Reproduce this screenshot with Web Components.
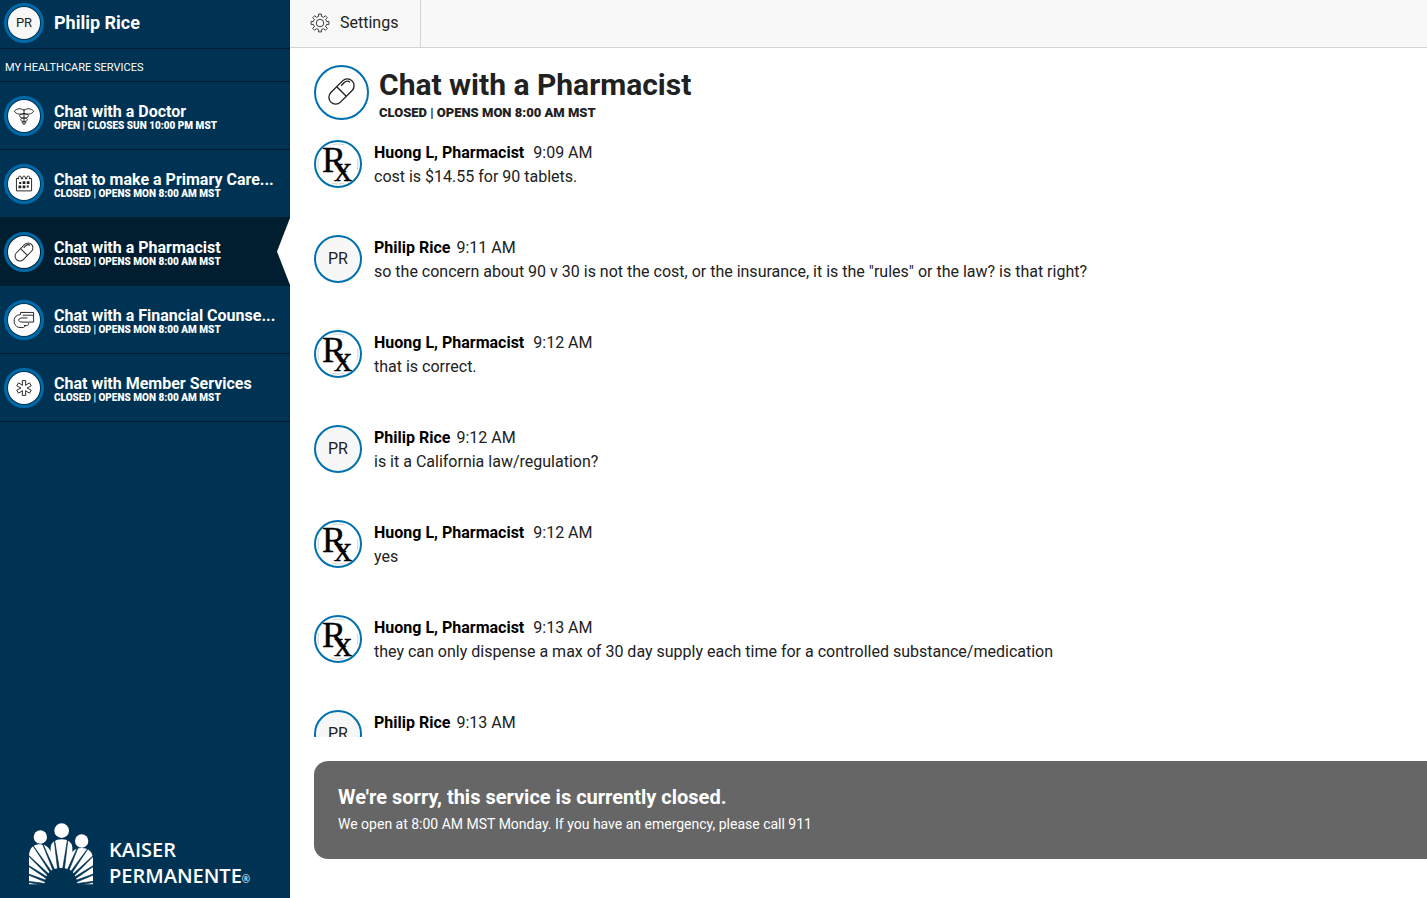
<!DOCTYPE html>
<html lang="en">
<head>
<meta charset="utf-8">
<meta name="viewport" content="width=device-width, initial-scale=1">
<title>Chat with a Pharmacist</title>
<style>
    html, body { margin: 0; height: 100%; }
    body { font-family: Roboto, "Liberation Sans", sans-serif; font-size: 16px; color: #212121; background: #fff; }
</style>
</head>
<body>
<chat-app>
    <side-nav slot="nav">
        <user-profile slot="profile" initials="PR">Philip Rice</user-profile>
        <service-item icon="doctor" status="OPEN | CLOSES SUN 10:00 PM MST">Chat with a Doctor</service-item>
        <service-item icon="calendar" status="CLOSED | OPENS MON 8:00 AM MST">Chat to make a Primary Care...</service-item>
        <service-item icon="pill" status="CLOSED | OPENS MON 8:00 AM MST" active>Chat with a Pharmacist</service-item>
        <service-item icon="card" status="CLOSED | OPENS MON 8:00 AM MST">Chat with a Financial Counse...</service-item>
        <service-item icon="asterisk" status="CLOSED | OPENS MON 8:00 AM MST">Chat with Member Services</service-item>
        <brand-logo slot="footer"></brand-logo>
    </side-nav>
    <tool-bar slot="toolbar">Settings</tool-bar>
    <chat-title slot="title" icon="pill" status="CLOSED | OPENS MON 8:00 AM MST">Chat with a Pharmacist</chat-title>

    <chat-message from="rx" name="Huong L, Pharmacist" time="9:09 AM">cost is $14.55 for 90 tablets.</chat-message>
    <chat-message name="Philip Rice" time="9:11 AM">so the concern about 90 v 30 is not the cost, or the insurance, it is the "rules" or the law? is that right?</chat-message>
    <chat-message from="rx" name="Huong L, Pharmacist" time="9:12 AM">that is correct.</chat-message>
    <chat-message name="Philip Rice" time="9:12 AM">is it a California law/regulation?</chat-message>
    <chat-message from="rx" name="Huong L, Pharmacist" time="9:12 AM">yes</chat-message>
    <chat-message from="rx" name="Huong L, Pharmacist" time="9:13 AM">they can only dispense a max of 30 day supply each time for a controlled substance/medication</chat-message>
    <chat-message name="Philip Rice" time="9:13 AM"></chat-message>

    <closed-banner slot="banner">
        <span slot="heading">We're sorry, this service is currently closed.</span>
        We open at 8:00 AM MST Monday. If you have an emergency, please call 911
    </closed-banner>
</chat-app>

<script>
// Outline of a star-like shape: a list of [radius, angle offset] repeated around the centre.
function radial(count, steps) {
    const points = [];
    for (let i = 0; i < count; i++) {
        steps.forEach(([r, offset]) => {
            const a = (i * 360 / count + offset - 90) * Math.PI / 180;
            points.push(`${(16 + r * Math.cos(a)).toFixed(2)} ${(16 + r * Math.sin(a)).toFixed(2)}`);
        });
    }
    return `M${points.join('L')}Z`;
}

// Wedges that are widest at the centre of the logo and close towards its edge.
function rays(angles) {
    return angles.map(deg => {
        const a = deg * Math.PI / 180;
        const dx = Math.cos(a);
        const dy = -Math.sin(a);
        const x = 123 + 165 * dx;
        const y = 215 + 165 * dy;
        return `M${x.toFixed(1)} ${y.toFixed(1)}L${(123 - 4 * dy).toFixed(1)} ${(215 + 4 * dx).toFixed(1)}L${(123 + 4 * dy).toFixed(1)} ${(215 - 4 * dx).toFixed(1)}Z`;
    }).join('');
}

const ICONS = {
    pill: `<g transform="rotate(-45 16 16)">
            <rect x="0.5" y="9" width="31" height="14" rx="7"/>
            <path d="M16 9v14M20 11.5h4.500a4.500 4.500 0 0 1 4.500 4"/>
        </g>`,
    gear: `<path d="${radial(8, [[10.8, -12], [14.5, -9], [14.5, 9], [10.8, 12]])}"/><circle cx="16" cy="16" r="6"/>`,
    asterisk: `<path d="${radial(6, [[11, -13], [11, 13], [4.5, 30]])}"/>`,
    doctor: `<path d="M16 8C12 4 5 5 2 9c3 5 9 5 14 3M16 8c4-4 11-3 14 1-3 5-9 5-14 3"/>
        <path d="M16 6v22M16 13c-9 0-8 6 0 6 7 0 6 5 0 5-4 0-3 3 0 4M16 13c9 0 8 6 0 6-7 0-6 5 0 5 4 0 3 3 0 4"/>`,
    calendar: `<path d="M8 8H5v18h22V8h-3M12 8h2M18 8h2M8 9V6l2-2 2 2v3M14 9V6l2-2 2 2v3M20 9V6l2-2 2 2v3"/>
        <path fill="currentColor" stroke="none" d="M14 12h4v4h-4zM20 12h4v4h-4zM9 13h3v3H9zM8 18h4v4H8zM14 18h4v4h-4zM20 18h3v3h-3z"/>`,
    card: `<path d="M11 8V5h19v14h-8M14 9h16M11 8C7 9 5 9 3 12c-2 4-2 9 1 12 2 3 5 3 9 3 5 0 5-3 3-3h4c3 0 4-4 1-5h-8c-3 0-5-2-5-3 1-2 3-3 5-3h8"/>`
};

class SvgIcon extends HTMLElement {
    connectedCallback()
    {
        this.attachShadow({mode: 'open'});
        this.shadowRoot.innerHTML = `
            <style>
                :host { display: block; width: var(--icon-size, 22px); height: var(--icon-size, 22px); color: #222; }
                svg { display: block; width: 100%; height: 100%; }
            </style>
            <svg viewBox="0 0 32 32" fill="none" stroke="currentColor" stroke-width="1.400" stroke-linejoin="round" aria-hidden="true">${ICONS[this.getAttribute('name')]}</svg>
        `;
    }
}

class NavBadge extends HTMLElement {
    connectedCallback()
    {
        this.attachShadow({mode: 'open'});
        this.shadowRoot.innerHTML = `
            <style>
                :host {
                    box-sizing: border-box; flex: none; display: flex; align-items: center; justify-content: center;
                    width: 40px; height: 40px; padding: 1px; border: 3px solid #0069a7; border-radius: 50%;
                    background: var(--badge-fill, #fff) content-box; color: #222; font-size: 13px;
                }
            </style>
            <slot></slot>
        `;
    }
}

class UserProfile extends HTMLElement {
    connectedCallback()
    {
        this.attachShadow({mode: 'open'});
        this.shadowRoot.innerHTML = `
            <style>
                :host { display: flex; align-items: center; gap: 10px; padding: 3px 4px 5px; border-bottom: 1px solid #001c2e; font-size: 18px; line-height: 20px; font-weight: 700; }
                nav-badge { --badge-fill: #f7f7f7; font-weight: 400; }
            </style>
            <nav-badge>${this.getAttribute('initials')}</nav-badge>
            <span><slot></slot></span>
        `;
    }
}

class ServiceItem extends HTMLElement {
    connectedCallback()
    {
        this.attachShadow({mode: 'open'});
        this.shadowRoot.innerHTML = `
            <style>
                :host { display: block; position: relative; border-bottom: 1px solid #001c2e; }
                :host([active]) { background: #001e30; }
                :host([active])::after {
                    content: ''; position: absolute; top: 0; bottom: 0; right: 0; width: 13px;
                    background: #fff; clip-path: polygon(100% 0, 0 50%, 100% 100%);
                }
                a { display: flex; align-items: center; gap: 10px; padding: 14px 4px 13px; color: #fff; text-decoration: none; }
                .text { min-width: 0; padding-top: 2px; }
                .name { display: block; line-height: 18px; font-weight: 700; white-space: nowrap; }
                .status { display: block; font-size: 10px; line-height: 10px; font-weight: 900; white-space: nowrap; }
            </style>
            <a href="#${this.getAttribute('icon')}">
                <nav-badge><svg-icon name="${this.getAttribute('icon')}"></svg-icon></nav-badge>
                <span class="text">
                    <span class="name"><slot></slot></span>
                    <span class="status">${this.getAttribute('status')}</span>
                </span>
            </a>
        `;
    }
}

class BrandLogo extends HTMLElement {
    connectedCallback()
    {
        this.attachShadow({mode: 'open'});
        this.shadowRoot.innerHTML = `
            <style>
                :host { display: flex; align-items: flex-end; gap: 15px; padding: 0 28px 13px; }
                svg { flex: none; width: 66px; height: 62px; }
                .words { margin-bottom: -7px; font: 600 20px/26px "Open Sans", "Noto Sans", sans-serif; }
                small { font-size: 10px; font-weight: 400; }
            </style>
            <svg viewBox="26 23 194 186" fill="#fff" aria-hidden="true">
                <path d="M27 207V122Q28 88 60 87Q82 87 92 108V96Q94 73 125 72Q155 73 157 96V110Q166 98 185 98Q218 99 219 132V207H172Q168 158 123 158Q78 158 74 207Z"/>
                <path fill="#003353" stroke="#003353" stroke-width="2" d="${rays([9, 21, 33, 44, 55, 67, 82, 98, 113, 124, 136, 147, 159, 171])}"/>
                <circle cx="61" cy="65" r="20"/>
                <circle cx="125" cy="46" r="22"/>
                <circle cx="185" cy="77" r="20"/>
            </svg>
            <div class="words">KAISER<br>PERMANENTE<small>®</small></div>
        `;
    }
}

class SideNav extends HTMLElement {
    connectedCallback()
    {
        this.attachShadow({mode: 'open'});
        this.shadowRoot.innerHTML = `
            <style>
                :host { display: flex; flex-direction: column; height: 100%; background: #003353; color: #fff; }
                h2 { margin: 0; padding: 11px 5px 5px; border-bottom: 1px solid #001c2e; font-size: 11px; line-height: 16px; font-weight: 400; }
                nav { flex: 1; }
            </style>
            <slot name="profile"></slot>
            <h2>MY HEALTHCARE SERVICES</h2>
            <nav><slot></slot></nav>
            <slot name="footer"></slot>
        `;
    }
}

class ToolBar extends HTMLElement {
    connectedCallback()
    {
        this.attachShadow({mode: 'open'});
        this.shadowRoot.innerHTML = `
            <style>
                :host { display: flex; height: 47px; background: #f8f8f8; border-bottom: 1px solid #d3d3d3; }
                button {
                    display: flex; align-items: center; gap: 10px; padding: 0 22px 2px 20px; cursor: pointer;
                    border: 0; border-right: 1px solid #d3d3d3; background: none; font: inherit; color: inherit;
                }
                svg-icon { --icon-size: 20px; }
            </style>
            <button type="button"><svg-icon name="gear"></svg-icon><slot></slot></button>
        `;
    }
}

class ChatTitle extends HTMLElement {
    connectedCallback()
    {
        this.attachShadow({mode: 'open'});
        this.shadowRoot.innerHTML = `
            <style>
                :host { display: flex; align-items: flex-start; gap: 10px; padding: 17px 24px 19px; }
                .ring {
                    --icon-size: 31px;
                    box-sizing: border-box; flex: none; display: flex; align-items: center; justify-content: center;
                    width: 55px; height: 55px; padding-bottom: 2px; border: 2px solid #0070ae; border-radius: 50%;
                }
                h1 { margin: 0; font-size: 30px; line-height: 40px; font-weight: 700; }
                p { margin: 0; font-size: 13px; line-height: 16px; font-weight: 900; }
            </style>
            <span class="ring"><svg-icon name="${this.getAttribute('icon')}"></svg-icon></span>
            <div>
                <h1><slot></slot></h1>
                <p>${this.getAttribute('status')}</p>
            </div>
        `;
    }
}

class ChatMessage extends HTMLElement {
    connectedCallback()
    {
        const isRx = this.getAttribute('from') === 'rx';
        const avatar = isRx
            ? `<svg viewBox="0 0 44 44" role="img" aria-label="Rx">
                    <circle cx="22" cy="22" r="20" fill="none" stroke="#c4c4c4" stroke-width="0.800" stroke-dasharray="12 19.400" stroke-dashoffset="6"/>
                    <text x="6" y="30">R<tspan dx="-12" dy="9">x</tspan></text>
                </svg>`
            : 'PR';

        this.attachShadow({mode: 'open'});
        this.shadowRoot.innerHTML = `
            <style>
                :host { display: flex; gap: 12px; min-height: 48px; margin-bottom: 47px; line-height: 26px; }
                .avatar {
                    box-sizing: border-box; flex: none; display: flex; align-items: center; justify-content: center;
                    width: 48px; height: 48px; border: 2px solid #0070ae; border-radius: 50%; background: #f7f7f7;
                }
                .avatar.rx { background: #fff; }
                svg { width: 44px; height: 44px; overflow: visible; }
                text { font: 36px "Liberation Serif", serif; fill: #000; stroke: #000; stroke-width: 0.4; }
                header { display: flex; gap: 6px; line-height: 26px; }
                header.rx { gap: 9px; }
                strong { color: #000; font-weight: 700; }
                p { margin: 0; line-height: 22px; }
            </style>
            <span class="avatar ${isRx ? 'rx' : ''}">${avatar}</span>
            <div>
                <header class="${isRx ? 'rx' : ''}"><strong>${this.getAttribute('name')}</strong><time>${this.getAttribute('time')}</time></header>
                <p><slot></slot></p>
            </div>
        `;
    }
}

class ClosedBanner extends HTMLElement {
    connectedCallback()
    {
        this.attachShadow({mode: 'open'});
        this.shadowRoot.innerHTML = `
            <style>
                :host { display: block; margin: 24px 0 39px 24px; padding: 24px 24px 25px; border-radius: 14px 0 0 14px; background: #666; color: #fff; }
                h2 { margin: 0 0 5px; font-size: 20px; line-height: 24px; font-weight: 700; }
                p { margin: 0; font-size: 14px; line-height: 20px; }
            </style>
            <h2><slot name="heading"></slot></h2>
            <p><slot></slot></p>
        `;
    }
}

class ChatApp extends HTMLElement {
    connectedCallback()
    {
        this.attachShadow({mode: 'open'});
        this.shadowRoot.innerHTML = `
            <style>
                :host { display: grid; grid-template-columns: 290px minmax(0, 1fr); height: 100vh; }
                aside { min-height: 0; }
                main { display: flex; flex-direction: column; min-height: 0; }
                .log { flex: 1; min-height: 0; padding: 0 24px; overflow-y: auto; scrollbar-width: none; }
            </style>
            <aside><slot name="nav"></slot></aside>
            <main>
                <slot name="toolbar"></slot>
                <slot name="title"></slot>
                <section class="log"><slot></slot></section>
                <slot name="banner"></slot>
            </main>
        `;
    }
}

customElements.define('svg-icon', SvgIcon);
customElements.define('nav-badge', NavBadge);
customElements.define('user-profile', UserProfile);
customElements.define('service-item', ServiceItem);
customElements.define('brand-logo', BrandLogo);
customElements.define('side-nav', SideNav);
customElements.define('tool-bar', ToolBar);
customElements.define('chat-title', ChatTitle);
customElements.define('chat-message', ChatMessage);
customElements.define('closed-banner', ClosedBanner);
customElements.define('chat-app', ChatApp);
</script>
</body>
</html>
